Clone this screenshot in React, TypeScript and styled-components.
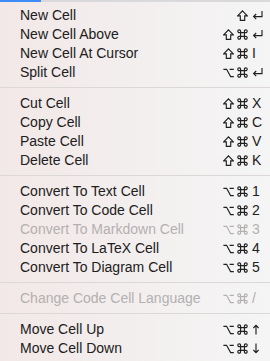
import styled, { createGlobalStyle } from "styled-components";

const GlobalStyle = createGlobalStyle`
    html, body {
        margin: 0;
        padding: 0;
        background: #f3f1f1;
    }
    body {
        width: 270px;
        height: 361px;
        overflow: hidden;
        font-family: "Liberation Sans", Arial, sans-serif;
    }
`;

type Mod = "shift" | "cmd" | "opt";
type Item = {
    label: string;
    mods: Mod[];
    key: string;
    disabled?: boolean;
};

// glyph paths drawn in an 11x11 box
const glyphs: Record<string, string> = {
    shift: "M5.5 0.8 L10.3 5.8 H7.7 V10.4 H3.3 V5.8 H0.7 Z",
    cmd:
        "M3.6 3.6 H7.4 V7.4 H3.6 Z " +
        "M3.6 3.6 V2.3 A1.4 1.4 0 1 0 2.3 3.6 H3.6 " +
        "M7.4 3.6 V2.3 A1.4 1.4 0 1 1 8.7 3.6 H7.4 " +
        "M3.6 7.4 V8.7 A1.4 1.4 0 1 1 2.3 7.4 H3.6 " +
        "M7.4 7.4 V8.7 A1.4 1.4 0 1 0 8.7 7.4 H7.4",
    opt: "M0.4 2.3 H3.6 L7.6 9.6 H10.8 M6.6 2.3 H10.8",
    ret: "M10 1 V6.6 H1.6 M4.2 4 L1.6 6.6 L4.2 9.2",
    up: "M4 10.4 V1.4 M1.4 4 L4 1.4 L6.6 4",
    down: "M4 0.6 V9.6 M1.4 7 L4 9.6 L6.6 7",
};

const groups: Item[][] = [
    [
        { label: "New Cell", mods: ["shift"], key: "ret" },
        { label: "New Cell Above", mods: ["shift", "cmd"], key: "ret" },
        { label: "New Cell At Cursor", mods: ["shift", "cmd"], key: "I" },
        { label: "Split Cell", mods: ["opt", "cmd"], key: "ret" },
    ],
    [
        { label: "Cut Cell", mods: ["shift", "cmd"], key: "X" },
        { label: "Copy Cell", mods: ["shift", "cmd"], key: "C" },
        { label: "Paste Cell", mods: ["shift", "cmd"], key: "V" },
        { label: "Delete Cell", mods: ["shift", "cmd"], key: "K" },
    ],
    [
        { label: "Convert To Text Cell", mods: ["opt", "cmd"], key: "1" },
        { label: "Convert To Code Cell", mods: ["opt", "cmd"], key: "2" },
        { label: "Convert To Markdown Cell", mods: ["opt", "cmd"], key: "3", disabled: true },
        { label: "Convert To LaTeX Cell", mods: ["opt", "cmd"], key: "4" },
        { label: "Convert To Diagram Cell", mods: ["opt", "cmd"], key: "5" },
    ],
    [{ label: "Change Code Cell Language", mods: ["opt", "cmd"], key: "/", disabled: true }],
    [
        { label: "Move Cell Up", mods: ["opt", "cmd"], key: "up" },
        { label: "Move Cell Down", mods: ["opt", "cmd"], key: "down" },
    ],
];

const Glyph = ({ name, width = 11 }: { name: string; width?: number }) => (
    <GlyphSvg width={width} height={11} viewBox={`0 0 ${width} 11`}>
        <path d={glyphs[name]} />
    </GlyphSvg>
);

const App = () => {
    return (
        <>
            <GlobalStyle />
            <Menu>
                <TopStrip>
                    <Highlight />
                </TopStrip>
                <List>
                    {groups.map((group, gi) => (
                        <Group key={gi}>
                            {gi > 0 && <Separator />}
                            {group.map((item) => (
                                <Row key={item.label} $disabled={item.disabled}>
                                    <Label>{item.label}</Label>
                                    <Shortcut>
                                        <Mods>
                                            {item.mods.map((m) => (
                                                <Glyph key={m} name={m} />
                                            ))}
                                        </Mods>
                                        <Key>
                                            {glyphs[item.key] ? (
                                                <Glyph
                                                    name={item.key}
                                                    width={item.key === "ret" ? 11 : 8}
                                                />
                                            ) : (
                                                item.key
                                            )}
                                        </Key>
                                    </Shortcut>
                                </Row>
                            ))}
                        </Group>
                    ))}
                </List>
            </Menu>
        </>
    );
};

const Menu = styled.div`
    width: 270px;
    height: 361px;
    background: linear-gradient(90deg, #f2e8e7 0%, #f3eeee 45%, #f5f5f5 100%);
    display: flex;
    flex-direction: column;
`;

const TopStrip = styled.div`
    height: 2px;
    background: #d9d9db;
    display: flex;
`;

const Highlight = styled.div`
    width: 41px;
    background: #3d8cf6;
`;

const List = styled.div`
    padding-top: 4px;
    display: flex;
    flex-direction: column;
`;

const Group = styled.div`
    display: flex;
    flex-direction: column;
`;

const Separator = styled.div`
    height: 1px;
    margin: 5px 0 6px;
    background: #dcd8d8;
`;

const Row = styled.div<{ $disabled?: boolean }>`
    height: 19px;
    line-height: 19px;
    padding: 0 6px 0 20px;
    display: flex;
    justify-content: space-between;
    font-size: 14px;
    color: ${(p) => (p.$disabled ? "#b3b0b0" : "#202020")};
`;

const Label = styled.span`
    white-space: nowrap;
`;

const Shortcut = styled.span`
    display: flex;
    align-items: center;
`;

const Mods = styled.span`
    display: flex;
    gap: 3px;
    margin-right: 3px;
`;

const Key = styled.span`
    width: 12px;
    display: flex;
    align-items: center;
    padding-left: 1px;
`;

const GlyphSvg = styled.svg`
    display: block;
    margin-top: -1px;
    fill: none;
    stroke: currentColor;
    stroke-width: 1.15;
    stroke-linejoin: miter;
`;

export default App;
